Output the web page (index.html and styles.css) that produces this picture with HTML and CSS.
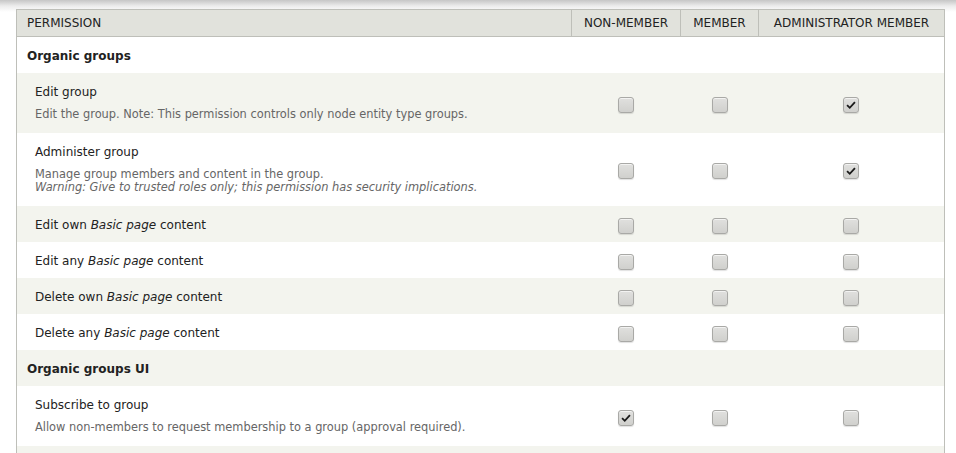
FILE: index.html
```html
<!DOCTYPE html>
<html>
<head>
<meta charset="utf-8">
<link rel="stylesheet" href="styles.css">
</head>
<body>
<div class="topshade"></div>
<div class="wrap">
<table class="perms">
  <colgroup>
    <col class="c-perm"><col class="c-non"><col class="c-mem"><col class="c-adm">
  </colgroup>
  <thead>
    <tr><th class="h-perm">Permission</th><th>Non-member</th><th>Member</th><th>Administrator member</th></tr>
  </thead>
  <tbody>
    <tr class="odd"><td class="module" colspan="4">Organic groups</td></tr>
    <tr class="even">
      <td class="perm"><div class="title">Edit group</div><div class="desc">Edit the group. Note: This permission controls only node entity type groups.</div></td>
      <td class="cb"><span class="box"></span></td>
      <td class="cb"><span class="box"></span></td>
      <td class="cb"><span class="box checked"><svg viewBox="0 0 16 16"><path d="M3.5 8.2 L6.6 11.2 L12.5 4.8" fill="none" stroke="#1a1a1a" stroke-width="2.1"/></svg></span></td>
    </tr>
    <tr class="odd">
      <td class="perm"><div class="title">Administer group</div><div class="desc">Manage group members and content in the group.<br><em>Warning: Give to trusted roles only; this permission has security implications.</em></div></td>
      <td class="cb"><span class="box"></span></td>
      <td class="cb"><span class="box"></span></td>
      <td class="cb"><span class="box checked"><svg viewBox="0 0 16 16"><path d="M3.5 8.2 L6.6 11.2 L12.5 4.8" fill="none" stroke="#1a1a1a" stroke-width="2.1"/></svg></span></td>
    </tr>
    <tr class="even">
      <td class="perm"><div class="title">Edit own <em>Basic page</em> content</div></td>
      <td class="cb"><span class="box"></span></td><td class="cb"><span class="box"></span></td><td class="cb"><span class="box"></span></td>
    </tr>
    <tr class="odd">
      <td class="perm"><div class="title">Edit any <em>Basic page</em> content</div></td>
      <td class="cb"><span class="box"></span></td><td class="cb"><span class="box"></span></td><td class="cb"><span class="box"></span></td>
    </tr>
    <tr class="even">
      <td class="perm"><div class="title">Delete own <em>Basic page</em> content</div></td>
      <td class="cb"><span class="box"></span></td><td class="cb"><span class="box"></span></td><td class="cb"><span class="box"></span></td>
    </tr>
    <tr class="odd">
      <td class="perm"><div class="title">Delete any <em>Basic page</em> content</div></td>
      <td class="cb"><span class="box"></span></td><td class="cb"><span class="box"></span></td><td class="cb"><span class="box"></span></td>
    </tr>
    <tr class="even"><td class="module" colspan="4">Organic groups UI</td></tr>
    <tr class="odd">
      <td class="perm"><div class="title">Subscribe to group</div><div class="desc">Allow non-members to request membership to a group (approval required).</div></td>
      <td class="cb"><span class="box checked"><svg viewBox="0 0 16 16"><path d="M3.5 8.2 L6.6 11.2 L12.5 4.8" fill="none" stroke="#1a1a1a" stroke-width="2.1"/></svg></span></td>
      <td class="cb"><span class="box"></span></td>
      <td class="cb"><span class="box"></span></td>
    </tr>
    <tr class="even"><td class="perm"><div class="title">&nbsp;</div></td><td></td><td></td><td></td></tr>
  </tbody>
</table>
</div>
</body>
</html>
```

FILE: styles.css
```css
html, body {
  margin: 0;
  padding: 0;
  background: #fff;
  font-family: "DejaVu Sans", Verdana, sans-serif;
  color: #222;
}
.topshade {
  height: 12px;
  margin-bottom: -12px;
  background: linear-gradient(#c6c6c6, #ececec 50%, #fff);
}
.wrap {
  padding: 9px 12px 0 16px;
}
.perms {
  width: 928px;
  border-collapse: collapse;
  border: 1px solid #bebfb9;
  table-layout: fixed;
}
.c-perm { width: 555px; }
.c-non { width: 109px; }
.c-mem { width: 78px; }
.c-adm { width: 186px; }
.perms th {
  background: #e1e2dc;
  border: 1px solid #bebfb9;
  font-weight: normal;
  font-size: 12px;
  text-transform: uppercase;
  color: #222;
  text-align: center;
  height: 26px;
  padding: 0 10px;
  line-height: 16px;
}
.perms th.h-perm { text-align: left; }
.perms td {
  padding: 11px 10px 9px;
  vertical-align: middle;
}
tr.odd { background: #fff; }
tr.even { background: #f3f4ee; }
td.module {
  font-weight: bold;
  font-size: 12px;
  line-height: 16px;
}
td.perm {
  padding-left: 18px;
}
.title {
  font-size: 12px;
  line-height: 16px;
}
.title em, .desc em { font-style: italic; }
.desc {
  font-size: 11.4px;
  line-height: 13px;
  color: #666;
  margin: 8px 0 3px;
}
.perms td.cb {
  text-align: center;
  padding: 0;
}
.box {
  display: block;
  width: 14px;
  height: 14px;
  margin: 3px auto 0;
  border: 1px solid #a9a9a6;
  border-radius: 3px;
  background: linear-gradient(#e0e0de, #d0d0cd);
  box-shadow: 0 1px 1px rgba(0,0,0,0.12), inset 0 1px 0 rgba(255,255,255,0.6);
  box-sizing: content-box;
}
.box svg {
  display: block;
  width: 14px;
  height: 14px;
}
```
